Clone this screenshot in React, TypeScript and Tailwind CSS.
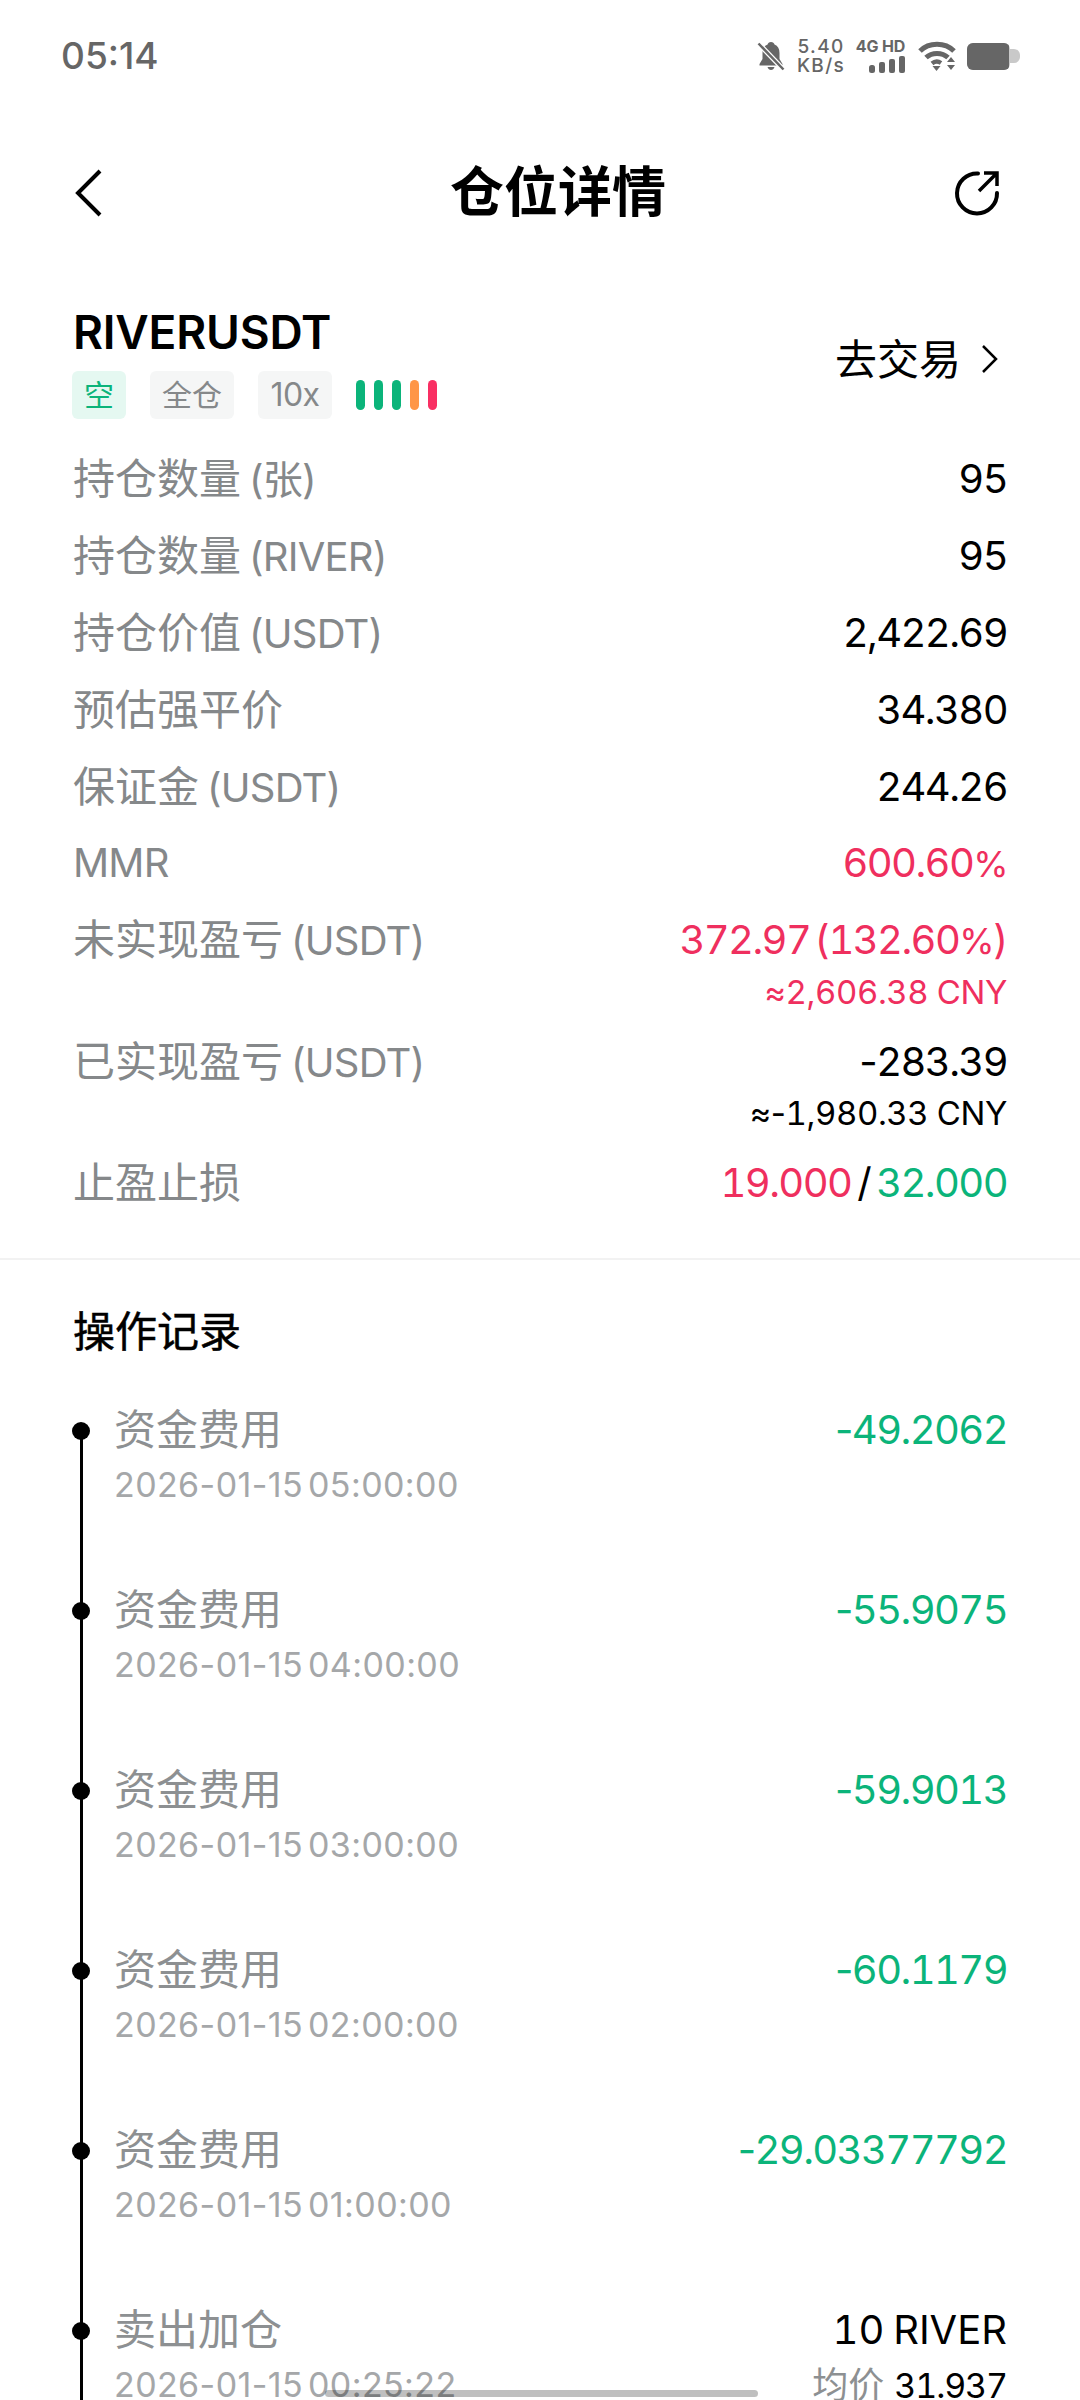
import React from "react";

const F = '[font-family:Inter,"Noto_Sans_CJK_SC",sans-serif]';

function N({ s }: { s: string }) {
  const parts = s.split(/([-%])/);
  return (
    <>
      {parts.map((p, i) =>
        p === "-" ? (
          <span key={i} className="normal-nums">-</span>
        ) : p === "%" ? (
          <span key={i} className="text-[36px]">%</span>
        ) : (
          <span key={i}>{p}</span>
        ),
      )}
    </>
  );
}

function Row({ cn, en, value, sub, color = "text-black", h = "h-[76.9px]" }: { cn?: string; en?: string; value: React.ReactNode; sub?: string; color?: string; h?: string }) {
  return (
    <div className={`flex justify-between ${h}`}>
      <div className="text-[40px] leading-[76px] tracking-[-0.8px] text-[#85888a]">
        {cn && <span className="mr-[8px] text-[42px] tracking-normal">{cn}</span>}
        {en && <span>{en}</span>}
      </div>
      <div className={`text-right ${color}`}>
        <div className="text-[40px] leading-[76px] tracking-[-1.6px] tabular-nums [word-spacing:-5px]">{typeof value === "string" ? <N s={value} /> : value}</div>
        {sub && <div className="text-[33px] leading-[40px] -mt-[7px] tabular-nums tracking-[-0.4px]"><N s={sub} /></div>}
      </div>
    </div>
  );
}

function Rec({ title, time, value, avg, color = "text-[#0bb47a] tracking-[-1.6px]" }: { title: string; time: string; value: string; avg?: string; color?: string }) {
  return (
    <div className="flex h-[180px]">
      <div className="relative w-[41px] shrink-0">
        <div className="absolute left-[7px] top-[27px] bottom-[-27px] w-[3px] bg-black" />
        <div className="absolute left-[-1px] top-[20px] size-[18px] rounded-full bg-black" />
      </div>
      <div className="flex-1">
        <div className="flex justify-between">
          <div className="text-[42px] leading-[56px] text-[#8d9092]">{title}</div>
          <div className={`text-[40px] leading-[56px] tabular-nums [word-spacing:-2px] ${color}`}><N s={value} /></div>
        </div>
        <div className="mt-[3px] flex justify-between">
          <div className="text-[34px] leading-[48px] tracking-[0.4px] [word-spacing:-5px] text-[#a5a7a9]">{time}</div>
          {avg && (
            <div className="text-[34px] leading-[48px] tabular-nums tracking-[-1.1px] text-black">
              <span className="text-[36px] tracking-normal text-[#8d9092]">均价</span>
              <span className="ml-[10px]">{avg}</span>
            </div>
          )}
        </div>
      </div>
    </div>
  );
}

export default function App() {
  return (
    <div className={`relative h-[2400px] overflow-hidden bg-white ${F}`}>
      {/* status bar */}
      <div className="flex h-[112px] items-center justify-between pl-[61px] pr-[60px] text-[#666]">
        <div className="text-[37px] font-medium">05:14</div>
        <div className="flex items-center">
          <svg width="28" height="30" viewBox="0 0 28 30" className="mr-[10px]">
            <path d="M14 1c-2 0-3 1-3.400 2.600C7 5 5.500 8 5.500 12v6L2.500 23v1.500h23V23l-3-5v-6c0-4-1.500-7-5-8.400C17 2 16 1 14 1zM10.500 26c.5 2 2 3 3.500 3s3-1 3.500-3z" fill="#666" />
            <path d="M1.500 2.500 26.500 28.500" stroke="#fff" strokeWidth="5" />
            <path d="M1.500 2.500 26.500 28.500" stroke="#666" strokeWidth="2.500" />
          </svg>
          <div className="mr-[10px] flex w-[52px] flex-col items-center text-[19px] font-medium leading-[19px] tracking-[1.300px]">
            <span>5.40</span>
            <span>KB/s</span>
          </div>
          <div className="mr-[13px] flex w-[48px] flex-col items-end">
            <span className="text-[16px] font-bold leading-[15px] whitespace-nowrap tracking-[-0.2px]">4G HD</span>
            <svg width="36" height="17" viewBox="0 0 36 17" className="mt-[2px]">
              <rect x="0" y="9" width="6" height="8" rx="2.500" fill="#666" />
              <rect x="10" y="6" width="6" height="11" rx="2" fill="#666" />
              <rect x="20" y="3" width="6" height="14" rx="2" fill="#666" />
              <rect x="30" y="0" width="6" height="17" rx="2" fill="#666" />
            </svg>
          </div>
          <svg width="38" height="30" viewBox="0 0 38 30" className="mr-[11px]">
            <path d="M2 10C11 1 27 1 36 10" stroke="#666" strokeWidth="5" fill="none" />
            <path d="M8 16.500C14 11 24 11 30 16.500" stroke="#666" strokeWidth="5" fill="none" />
            <path d="M14 22.500C17 20 20 20 23 22" stroke="#666" strokeWidth="4.500" fill="none" />
            <path d="M14.500 25h8l-4 5z" fill="#666" />
            <path d="M33 16l4 5h-8zM29 24h8l-4 5z" fill="#666" />
          </svg>
          <div className="flex items-center">
            <div className="flex h-[27px] w-[43px] overflow-hidden rounded-[6px] bg-[#c9c9c9]">
              <div className="h-full w-[42px] bg-[#666]" />
            </div>
            <div className="h-[14px] w-[11px] -ml-[1px] rounded-r-[6px] bg-[#c9c9c9]" />
          </div>
        </div>
      </div>

      {/* nav */}
      <div className="relative mt-[26px] flex h-[110px] items-center justify-between pl-[73px] pr-[79px]">
        <svg width="30" height="50" viewBox="0 0 30 50"><path d="M27 3 5 25l22 22" fill="none" stroke="#000" strokeWidth="4" /></svg>
        <div className="absolute inset-x-0 pl-[36px] text-center text-[54px] font-semibold leading-[110px] text-black">仓位详情</div>
        <svg width="48" height="48" viewBox="0 0 48 48">
          <path d="M25 4.500A20 20 0 1 0 44 24" fill="none" stroke="#000" strokeWidth="4" strokeLinecap="round" />
          <path d="M26 22 43 5M31 4h13v13" fill="none" stroke="#000" strokeWidth="3.500" />
        </svg>
      </div>

      {/* summary */}
      <div className="px-[73px] pt-[57px]">
        <div className="flex items-center justify-between">
          <div>
            <div className="text-[46px] font-semibold leading-[54px] tracking-[-0.2px] text-black">RIVERUSDT</div>
            <div className="mt-[12px] flex items-center">
              <span className="-ml-[1px] flex h-[48px] w-[54px] items-center justify-center rounded-[6px] bg-[#e5f8f1] text-[30px] text-[#0bb47a]">空</span>
              <span className="ml-[24px] flex h-[48px] w-[84px] items-center justify-center rounded-[6px] bg-[#f5f6f6] text-[30px] text-[#85888a]">全仓</span>
              <span className="ml-[24px] flex h-[48px] w-[74px] items-center justify-center rounded-[6px] bg-[#f5f6f6] text-[32px] tracking-[-0.6px] text-[#85888a]">10x</span>
              <div className="ml-[24px] flex gap-[9px]">
                <i className="h-[30px] w-[9px] rounded-full bg-[#0bb47a]" />
                <i className="h-[30px] w-[9px] rounded-full bg-[#0bb47a]" />
                <i className="h-[30px] w-[9px] rounded-full bg-[#0bb47a]" />
                <i className="h-[30px] w-[9px] rounded-full bg-[#ff9647]" />
                <i className="h-[30px] w-[9px] rounded-full bg-[#f92f63]" />
              </div>
            </div>
          </div>
          <div className="mb-[6px] flex items-center text-[42px] text-black">
            去交易
            <svg width="18" height="30" viewBox="0 0 18 30" className="ml-[20px] mr-[8px]"><path d="M2 2l13 13L2 28" fill="none" stroke="#000" strokeWidth="2.500" /></svg>
          </div>
        </div>
        <div className="mt-[22px]">
          <Row cn="持仓数量" en="(张)" value="95" />
          <Row cn="持仓数量" en="(RIVER)" value="95" />
          <Row cn="持仓价值" en="(USDT)" value="2,422.69" />
          <Row cn="预估强平价" value="34.380" />
          <Row cn="保证金" en="(USDT)" value="244.26" />
          <Row en="MMR" value="600.60%" color="text-[#ef2f5e]" />
          <Row cn="未实现盈亏" en="(USDT)" value="372.97 (132.60%)" sub="≈2,606.38 CNY" color="text-[#ef2f5e]" h="h-[122px]" />
          <Row cn="已实现盈亏" en="(USDT)" value="-283.39" sub="≈-1,980.33 CNY" h="h-[121px]" />
          <Row cn="止盈止损" value={<><span className="text-[#ef2f5e]">19.000</span><span className="mx-[6px]">/</span><span className="text-[#0bb47a]">32.000</span></>} />
        </div>
      </div>

      <div className="mt-[36px] h-[2px] bg-[#f2f2f2]" />

      {/* records */}
      <div className="px-[73px] pt-[47px]">
        <div className="text-[42px] font-normal leading-[50px] text-black [-webkit-text-stroke:0.5px_#000]">操作记录</div>
        <div className="mt-[45px]">
          <Rec title="资金费用" time="2026-01-15 05:00:00" value="-49.2062" />
          <Rec title="资金费用" time="2026-01-15 04:00:00" value="-55.9075" />
          <Rec title="资金费用" time="2026-01-15 03:00:00" value="-59.9013" />
          <Rec title="资金费用" time="2026-01-15 02:00:00" value="-60.1179" />
          <Rec title="资金费用" time="2026-01-15 01:00:00" value="-29.03377792" />
          <Rec title="卖出加仓" time="2026-01-15 00:25:22" value="10 RIVER" color="text-black tracking-[0px]" avg="31.937" />
        </div>
      </div>

      <div className="absolute bottom-[3px] left-[325px] h-[7px] w-[433px] rounded-full bg-black/25" />
    </div>
  );
}
